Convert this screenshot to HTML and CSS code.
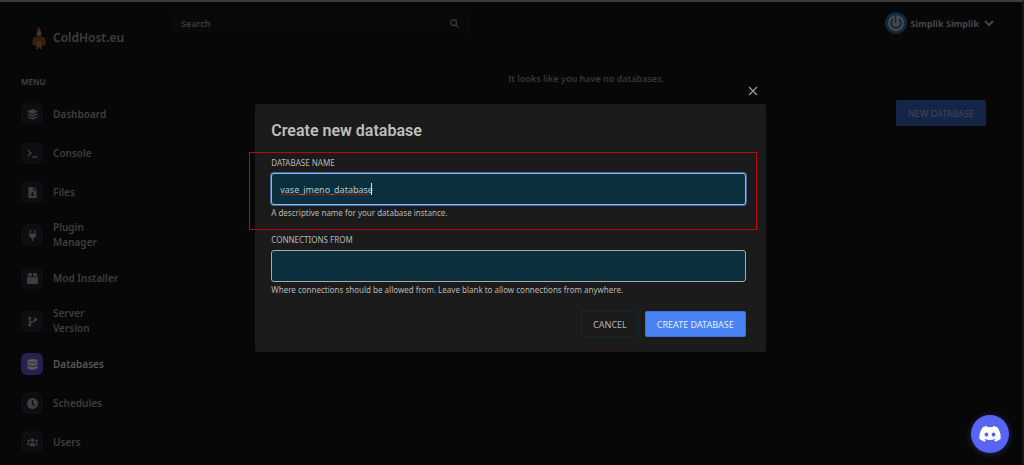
FILE: index.html
```html
<!DOCTYPE html>
<html lang="en">
<head>
<meta charset="utf-8">
<meta name="viewport" content="width=device-width, initial-scale=1">
<title>ColdHost.eu - Databases</title>
<link rel="stylesheet" href="styles.css">
</head>
<body>
<div class="app">
  <aside class="sidebar">
    <a class="brand" href="#">
      <svg class="brand-logo" viewBox="0 0 14 22" aria-hidden="true">
        <path d="M7 0 9 4 9.500 8H4.500L5 4Z" fill="#4a2810"/>
        <path d="M5 5h4v4H5z" fill="#3b3634"/>
        <path d="M1 11 4 9.500h6L13 11l1 6-3 2H3l-3-2Z" fill="#382008"/>
        <path d="M4 10h6l-1 5H5Z" fill="#272221"/>
        <path d="M5 14h4v4l1 4H8l-1-3-1 3H4l1-4Z" fill="#46291a"/>
      </svg>
      <span>ColdHost.eu</span>
    </a>
    <h2 class="menu-title">MENU</h2>
    <nav class="menu">
      <a class="item" href="#"><span class="tile"><svg viewBox="0 0 16 16"><path d="m8 0 8 3.700L8 7.500 0 3.700Z"/><path d="m2 6.200 6 2.800 6-2.800 2 1.300-8 4-8-4Z"/><path d="m2 10.400 6 2.800 6-2.800 2 1.300-8 4-8-4Z"/></svg></span><span>Dashboard</span></a>
      <a class="item" href="#"><span class="tile"><svg viewBox="0 0 16 16"><path class="line" d="m1 3 5 4.500L1 12M7.500 13H15"/></svg></span><span>Console</span></a>
      <a class="item" href="#"><span class="tile"><svg viewBox="0 0 16 16"><path fill-rule="evenodd" d="M2 0h7v5h5v11H2ZM7 7v3H4.500L8 13.500 11.500 10H9V7Z"/><path d="m10 0 4 4h-4Z"/></svg></span><span>Files</span></a>
      <a class="item" href="#"><span class="tile"><svg viewBox="0 0 16 16"><path d="M4 0h2v4H4zM10 0h2v4h-2zM2 5h12v2h-1c0 3-1.500 4.500-4 5v4H7v-4c-2.500-.5-4-2-4-5H2Z"/></svg></span><span>Plugin Manager</span></a>
      <a class="item" href="#"><span class="tile"><svg viewBox="0 0 16 16"><path d="M2.500 0H7v5H0ZM9 0h4.500L16 5H9ZM0 6h16v8q0 2-2 2H2q-2 0-2-2Z"/></svg></span><span>Mod Installer</span></a>
      <a class="item" href="#"><span class="tile"><svg viewBox="0 0 16 16"><circle cx="4" cy="3" r="2.400"/><circle cx="4" cy="13" r="2.400"/><circle cx="12.500" cy="5" r="2.400"/><path class="line" d="M4 3v10M12.500 5c0 5-8.500 2-8.500 6"/></svg></span><span>Server<br>Version</span></a>
      <a class="item active" href="#" aria-current="page"><span class="tile"><svg viewBox="0 0 16 16"><ellipse cx="8" cy="2.500" rx="7.500" ry="2.500"/><path d="M.5 4.500Q8 8 15.500 4.500V8Q8 12 .5 8ZM.5 9.700Q8 13 15.500 9.700v3.800Q8 18.500.5 13.500Z"/></svg></span><span>Databases</span></a>
      <a class="item" href="#"><span class="tile"><svg viewBox="0 0 16 16"><path fill-rule="evenodd" d="M8 0a8 8 0 1 0 0 16A8 8 0 1 0 8 0ZM7 3h2v5l3 2-1.200 1.700L7 9Z"/></svg></span><span>Schedules</span></a>
      <a class="item" href="#"><span class="tile"><svg viewBox="0 0 16 16"><circle cx="8" cy="4.500" r="2.700"/><circle cx="2.500" cy="5.500" r="1.800"/><circle cx="13.500" cy="5.500" r="1.800"/><path d="M3.500 13.500c0-7 9-7 9 0ZM0 11.500C0 8 2 7.500 4 8q-1.500 1.500-1.700 3.500ZM16 11.500C16 8 14 7.500 12 8q1.500 1.500 1.700 3.500Z"/></svg></span><span>Users</span></a>
    </nav>
  </aside>
  <div class="page">
    <header class="topbar">
      <form class="search" role="search">
        <input type="search" placeholder="Search" aria-label="Search">
        <button type="button" aria-label="Submit search"><svg viewBox="0 0 16 16"><circle class="line" cx="6.500" cy="6.500" r="5"/><path class="line" d="m10.500 10.500 4.500 4.500"/></svg></button>
      </form>
      <button class="account" type="button">
        <svg class="avatar" viewBox="0 0 22 22" aria-hidden="true"><circle cx="11" cy="11" r="11" fill="#10293e"/><circle cx="11" cy="11" r="8" fill="#484848"/><path d="M8 7.300a4.800 4.800 0 1 0 6 0" fill="none" stroke="#10293e" stroke-width="2"/><path d="M10.500 2.500v8.500" stroke="#10293e" stroke-width="1.500"/></svg>
        <span>Simplik Simplik</span>
        <svg class="chevron" viewBox="0 0 10 8" aria-hidden="true"><path class="line" d="m1 2 4 4 4-4"/></svg>
      </button>
    </header>
    <main class="content">
      <p class="empty">It looks like you have no databases.</p>
      <button class="btn new" type="button">NEW DATABASE</button>
    </main>
  </div>
</div>

<div class="overlay">
  <div class="modal-wrap">
    <button class="close" type="button" aria-label="Close"><svg viewBox="0 0 10 10"><path d="m1 1 8 8M9 1 1 9"/></svg></button>
    <form class="modal" role="dialog" aria-labelledby="modal-title">
      <h1 id="modal-title">Create new database</h1>
      <div class="field marked">
        <label for="db-name">DATABASE NAME</label>
        <div class="control">
          <input class="box focused" id="db-name" type="text" value="vase_jmeno_database">
          <svg class="squiggle" aria-hidden="true"><defs><pattern id="wave" width="4" height="3" patternUnits="userSpaceOnUse"><path d="m0 2.500 2-2 2 2" fill="none" stroke="#c01c1c"/></pattern></defs><rect width="100%" height="3" fill="url(#wave)"/></svg>
          <span class="caret"></span>
        </div>
        <p>A descriptive name for your database instance.</p>
      </div>
      <div class="field">
        <label for="db-from">CONNECTIONS FROM</label>
        <input class="box" id="db-from" type="text">
        <p>Where connections should be allowed from. Leave blank to allow connections from anywhere.</p>
      </div>
      <div class="actions">
        <button class="btn cancel" type="button">CANCEL</button>
        <button class="btn create" type="button">CREATE DATABASE</button>
      </div>
    </form>
  </div>
</div>

<a class="discord" href="#" aria-label="Discord"><svg viewBox="0 0 24 18"><path fill-rule="evenodd" d="M20.300 1.500A19 19 0 0 0 15.500 0l-.7 1.300a18 18 0 0 0-5.600 0L8.500 0a19 19 0 0 0-4.800 1.500C.7 6-.2 10.400.1 14.700A20 20 0 0 0 6 17.700l1.300-2-2-1 .5-.4a14 14 0 0 0 12.400 0l.5.4-2 1 1.300 2a20 20 0 0 0 5.900-3c.5-5-.8-9.300-3.600-13.200ZM8 12a2.200 2.400 0 1 1 0-4.800A2.200 2.400 0 1 1 8 12Zm8 0a2.200 2.400 0 1 1 0-4.800A2.200 2.400 0 1 1 16 12Z"/></svg></a>
</body>
</html>
```

FILE: styles.css
```css
* { box-sizing: border-box; }

body {
  margin: 0;
  background: #070707;
  border-top: 2px solid #3c3c3c;
  border-right: 2px solid #171717;
  min-height: 100vh;
  color: #3e3e3e;
  font: 600 10px/15px "Noto Sans", "Open Sans", sans-serif;
}

h1, h2, p { margin: 0; }
a { color: inherit; text-decoration: none; }
button, input { font: inherit; color: inherit; margin: 0; }
button { border: 0; background: none; padding: 0; cursor: pointer; }
svg { display: block; fill: currentColor; }
.line { fill: none; stroke: currentColor; stroke-width: 2; }

.app { display: flex; height: calc(100vh - 2px); overflow: hidden; }

/* Sidebar */
.sidebar { flex: 0 0 150px; padding: 24px 21px 0; }
.brand {
  display: flex;
  align-items: center;
  gap: 7px;
  padding-left: 11px;
  font-size: 12px;
  line-height: 24px;
  white-space: nowrap;
}
.brand-logo { width: 14px; height: 22px; }
.menu-title {
  margin: 25px 0 14px;
  font-size: 8px;
  line-height: 14px;
  font-weight: 700;
}
.menu { display: flex; flex-direction: column; gap: 17px; }
.item { display: flex; align-items: center; gap: 10px; }
.tile {
  flex: none;
  display: grid;
  place-items: center;
  width: 22px;
  height: 22px;
  border-radius: 6px;
  background: #0d0d12;
}
.tile svg { width: 11px; height: 11px; }
.active { color: #575757; }
.active .tile { background: #282150; }

/* Header and page body */
.page { flex: 1; min-width: 0; }
.topbar {
  display: flex;
  justify-content: space-between;
  align-items: center;
  padding: 10px 28px 0 21px;
}
.search {
  display: flex;
  align-items: center;
  width: 300px;
  height: 22px;
  padding: 0 12px 0 10px;
  border-radius: 4px;
  background: #090909;
}
.search input { flex: 1; min-width: 0; padding: 0; border: 0; outline: 0; background: none; font-size: 9px; }
.search input::placeholder { color: inherit; opacity: 1; }
.search svg { width: 9px; height: 9px; }
.account { display: flex; align-items: center; gap: 4px; color: #464646; font-size: 9px; font-weight: 700; }
.avatar { width: 22px; height: 22px; }
.chevron { width: 10px; height: 8px; margin-left: 1px; }
.content { display: flex; flex-direction: column; padding: 37px 36px 0; }
.empty { text-align: center; font-size: 9px; color: #363636; }
.btn {
  height: 26px;
  padding: 0 11px;
  border: 1px solid transparent;
  border-radius: 2px;
  font-weight: 400;
  font-size: 9px;
}
.new { align-self: flex-end; margin-top: 14px; background: #142548; color: #424851; }

/* Dialog */
.overlay {
  position: fixed;
  inset: 0;
  display: flex;
  justify-content: center;
  align-items: flex-start;
  padding: 82px 3px 0 0;
}
.modal-wrap { display: flex; flex-direction: column; width: 50%; }
.close { align-self: flex-end; padding: 4px 8px; color: #999; }
.close svg { width: 10px; height: 10px; margin-bottom: 4px; stroke: currentColor; stroke-width: 1.3; }
.modal {
  padding: 16px 20px 15px 16px;
  border-radius: 3px;
  background: #1b1b1b;
  color: #b8b8b8;
  font-weight: 400;
}
.modal h1 {
  margin-bottom: 10px;
  font: 600 16px/22px Roboto, "Noto Sans", sans-serif;
  color: #bebebe;
}
.field label, .field p { display: block; font-size: 8px; line-height: 12px; }
.field { padding-top: 4px; }
.marked {
  margin: 0 -11px 0 -22px;
  padding: 4px 10px 10px 21px;
  border: 1px solid #b80c0c;
}
.control { position: relative; }
.box {
  display: block;
  width: 100%;
  height: 32px;
  margin: 4px 0 2px;
  padding: 0 8px;
  border: 1px solid #a7aaa9;
  border-radius: 3px;
  outline: 0;
  background: #0b2f3d;
  color: #b9c3c7;
  font-size: 9px;
}
.focused {
  border-color: #8cb6f5;
  box-shadow: 0 0 0 1px #46679f;
}
.squiggle { position: absolute; left: 9px; top: 20px; width: 90px; height: 3px; }
.caret { position: absolute; left: 100px; top: 10px; width: 1px; height: 12px; background: #ddd; }
.actions { display: flex; justify-content: flex-end; gap: 6px; margin-top: 15px; }
.cancel { border-color: #10282f; }
.create { background: #4983f3; border-color: #3d6fd5; color: #e4ecfc; }

/* Chat shortcut */
.discord {
  position: fixed;
  right: 15px;
  bottom: 12px;
  display: grid;
  place-items: center;
  width: 38px;
  height: 38px;
  border-radius: 50%;
  background: #5865f2;
  color: #fff;
  box-shadow: 0 1px 6px #262b66;
}
.discord svg { width: 22px; height: 16px; }
```
